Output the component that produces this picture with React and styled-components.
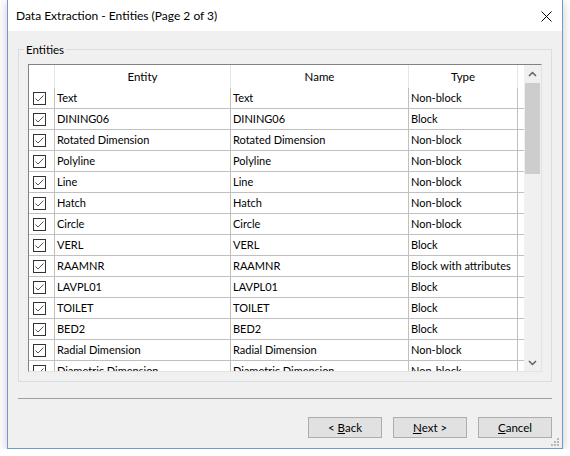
import React from "react";
import styled, { createGlobalStyle } from "styled-components";

const GlobalStyle = createGlobalStyle`
  html, body {
    margin: 0;
    padding: 0;
    background: #ffffff;
  }
  body {
    font-family: Lato, "Noto Sans", "Liberation Sans", sans-serif;
    font-size: 11.5px;
    color: #000;
  }
`;

const ROWS = [
  ["Text", "Text", "Non-block"],
  ["DINING06", "DINING06", "Block"],
  ["Rotated Dimension", "Rotated Dimension", "Non-block"],
  ["Polyline", "Polyline", "Non-block"],
  ["Line", "Line", "Non-block"],
  ["Hatch", "Hatch", "Non-block"],
  ["Circle", "Circle", "Non-block"],
  ["VERL", "VERL", "Block"],
  ["RAAMNR", "RAAMNR", "Block with attributes"],
  ["LAVPL01", "LAVPL01", "Block"],
  ["TOILET", "TOILET", "Block"],
  ["BED2", "BED2", "Block"],
  ["Radial Dimension", "Radial Dimension", "Non-block"],
  ["Diametric Dimension", "Diametric Dimension", "Non-block"],
];

const COLS = [26, 176, 178, 109];

const App = () => {
  return (
    <>
      <GlobalStyle />
      <Window>
        <TitleBar>
          <Title>Data Extraction - Entities (Page 2 of 3)</Title>
          <CloseButton>
            <svg width="11" height="11" viewBox="0 0 11 11">
              <path d="M0.5 0.5 L10.5 10.5 M10.5 0.5 L0.5 10.5" stroke="#000" strokeWidth="1" />
            </svg>
          </CloseButton>
        </TitleBar>
        <Body>
          <GroupBox>
            <Caption>Entities</Caption>
            <ListBox>
              <ListContent>
                <HeaderRow>
                  <HeaderCell width={COLS[0]} />
                  <HeaderCell width={COLS[1]}>Entity</HeaderCell>
                  <HeaderCell width={COLS[2]}>Name</HeaderCell>
                  <HeaderCell width={COLS[3]}>Type</HeaderCell>
                </HeaderRow>
                {ROWS.map((row, i) => (
                  <Row key={i}>
                    <CheckCell width={COLS[0]}>
                      <CheckBox>
                        <svg width="11" height="11" viewBox="0 0 11 11">
                          <path d="M1.5 5.5 L4 8 L9.5 2.5" fill="none" stroke="#555" strokeWidth="1" />
                        </svg>
                      </CheckBox>
                    </CheckCell>
                    <Cell width={COLS[1]}>{row[0]}</Cell>
                    <Cell width={COLS[2]}>{row[1]}</Cell>
                    <Cell width={COLS[3]}>{row[2]}</Cell>
                  </Row>
                ))}
              </ListContent>
              <ScrollBar>
                <ArrowBox>
                  <svg width="9" height="6" viewBox="0 0 9 6">
                    <path d="M1 5 L4.5 1.5 L8 5" fill="none" stroke="#606060" strokeWidth="1.5" />
                  </svg>
                </ArrowBox>
                <Track>
                  <Thumb />
                </Track>
                <ArrowBox>
                  <svg width="9" height="6" viewBox="0 0 9 6">
                    <path d="M1 1 L4.5 4.5 L8 1" fill="none" stroke="#606060" strokeWidth="1.5" />
                  </svg>
                </ArrowBox>
              </ScrollBar>
            </ListBox>
          </GroupBox>
          <Separator />
          <ButtonRow>
            <Button>
              &lt; <u>B</u>ack
            </Button>
            <Button>
              <u>N</u>ext &gt;
            </Button>
            <Button>
              <u>C</u>ancel
            </Button>
          </ButtonRow>
          <Grip>
            <svg width="10" height="10" viewBox="0 0 10 10">
              <rect x="7" y="1" width="2" height="2" fill="#b8b8b8" />
              <rect x="4" y="4" width="2" height="2" fill="#b8b8b8" />
              <rect x="7" y="4" width="2" height="2" fill="#b8b8b8" />
              <rect x="1" y="7" width="2" height="2" fill="#b8b8b8" />
              <rect x="4" y="7" width="2" height="2" fill="#b8b8b8" />
              <rect x="7" y="7" width="2" height="2" fill="#b8b8b8" />
            </svg>
          </Grip>
        </Body>
      </Window>
    </>
  );
};

const Window = styled.div`
  position: relative;
  box-sizing: border-box;
  margin-left: 7px;
  width: 556px;
  height: 449px;
  border: 1px solid #6d9bd1;
  border-top: none;
  display: flex;
  flex-direction: column;
  box-shadow: 0 2px 10px rgba(0, 0, 0, 0.22);
`;

const TitleBar = styled.div`
  height: 31px;
  background: #ffffff;
  display: flex;
  align-items: center;
  justify-content: space-between;
  padding: 1px 10px 0 8px;
  box-sizing: border-box;
  flex-shrink: 0;
`;

const Title = styled.span`
  font-size: 12px;
  line-height: 16px;
  color: #000;
`;

const CloseButton = styled.div`
  display: flex;
  align-items: center;
  justify-content: center;
  width: 11px;
  height: 11px;
`;

const Body = styled.div`
  position: relative;
  flex: 1;
  background: #f0f0f0;
  padding: 0 10px;
  display: flex;
  flex-direction: column;
`;

const GroupBox = styled.div`
  position: relative;
  box-sizing: border-box;
  margin-top: 18px;
  height: 333px;
  border: 1px solid #dcdcdc;
  padding: 14px 9px 0 9px;
`;

const Caption = styled.span`
  position: absolute;
  top: -8px;
  left: 5px;
  padding: 0 2px;
  background: #f0f0f0;
  line-height: 16px;
`;

const ListBox = styled.div`
  box-sizing: border-box;
  height: 308px;
  border: 1px solid #e3e3e3;
  border-top-color: #828282;
  border-left-color: #828282;
  background: #ffffff;
  display: flex;
  overflow: hidden;
`;

const ListContent = styled.div`
  flex: 1;
  overflow: hidden;
`;

const HeaderRow = styled.div`
  display: flex;
  height: 23px;
`;

const HeaderCell = styled.div`
  box-sizing: border-box;
  width: ${(p) => p.width}px;
  flex-shrink: 0;
  border-right: 1px solid #e5e5e5;
  display: flex;
  align-items: center;
  justify-content: center;
  padding-top: 1px;
  line-height: 16px;
`;

const Row = styled.div`
  display: flex;
  height: 21px;
  box-sizing: border-box;
  border-bottom: 1px solid #c0c0c0;
`;

const Cell = styled.div`
  box-sizing: border-box;
  width: ${(p) => p.width}px;
  flex-shrink: 0;
  border-right: 1px solid #c0c0c0;
  padding: 0 0 0 2px;
  display: flex;
  align-items: center;
  white-space: nowrap;
  overflow: hidden;
  line-height: 16px;
  font-size: 11px;
`;

const CheckCell = styled(Cell)`
  padding: 0 0 0 4px;
`;

const CheckBox = styled.div`
  box-sizing: border-box;
  width: 13px;
  height: 13px;
  border: 1px solid #333333;
  background: #ffffff;
  display: flex;
  align-items: center;
  justify-content: center;
`;

const ScrollBar = styled.div`
  width: 17px;
  flex-shrink: 0;
  background: #f0f0f0;
  display: flex;
  flex-direction: column;
`;

const ArrowBox = styled.div`
  height: 17px;
  display: flex;
  align-items: center;
  justify-content: center;
  flex-shrink: 0;
`;

const Track = styled.div`
  flex: 1;
  padding: 1px 1px 0 1px;
`;

const Thumb = styled.div`
  height: 91px;
  background: #cdcdcd;
`;

const Separator = styled.div`
  margin-top: 16px;
  height: 1px;
  background: #a0a0a0;
`;

const ButtonRow = styled.div`
  margin-top: 18px;
  display: flex;
  justify-content: flex-end;
  gap: 11px;
`;

const Button = styled.div`
  box-sizing: border-box;
  width: 74px;
  height: 21px;
  background: #e1e1e1;
  border: 1px solid #adadad;
  display: flex;
  align-items: center;
  justify-content: center;
  line-height: 16px;
  white-space: pre;
`;

const Grip = styled.div`
  position: absolute;
  right: 2px;
  bottom: 2px;
  width: 10px;
  height: 10px;
`;

export default App;
